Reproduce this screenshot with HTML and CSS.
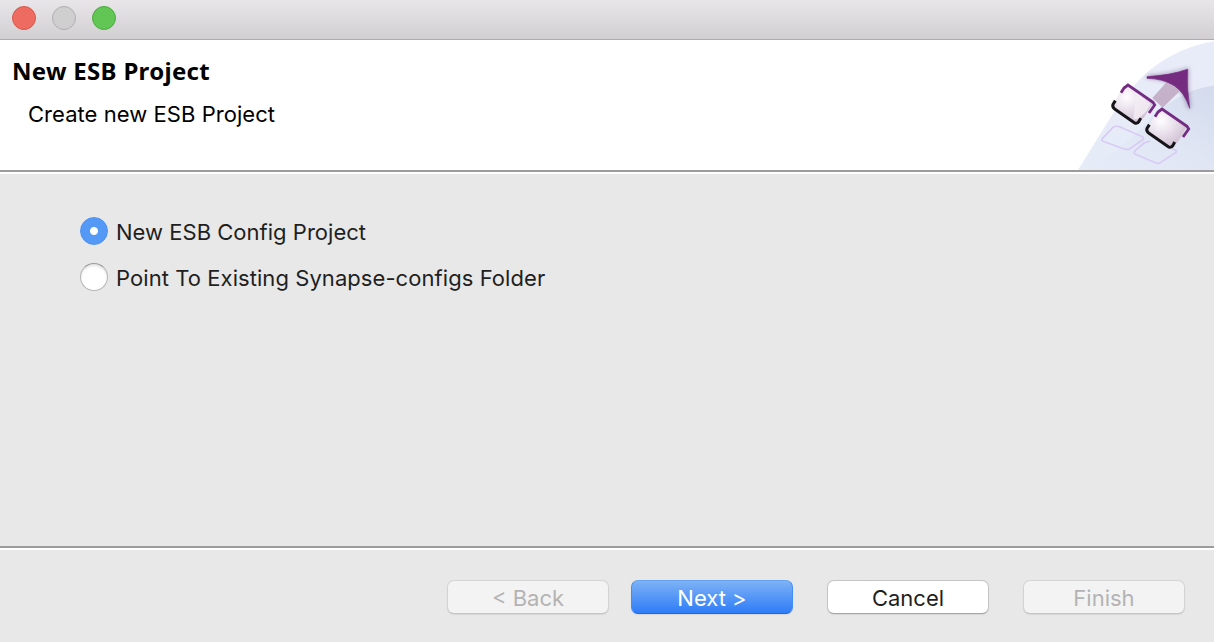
FILE: index.html
```html
<!DOCTYPE html>
<html lang="en">
<head>
<meta charset="utf-8">
<title>New ESB Project</title>
<link rel="stylesheet" href="styles.css">
</head>
<body>
<div class="dialog">
  <div class="titlebar">
    <span class="light close"></span>
    <span class="light minimize"></span>
    <span class="light maximize"></span>
  </div>
  <header class="banner">
    <div class="heading">
      <h1 class="title">New ESB Project</h1>
      <p class="subtitle">Create new ESB Project</p>
    </div>
    <svg class="art" viewBox="24 12 408 390" aria-hidden="true">
      <defs>
        <linearGradient id="sky" x1="0" y1="0" x2="0" y2="1">
          <stop offset="0" stop-color="#e9ecf8"/><stop offset="1" stop-color="#e6ebf8"/>
        </linearGradient>
        <linearGradient id="deep" x1="0" y1="1" x2="1" y2="0">
          <stop offset="0" stop-color="#e6ebf8"/><stop offset=".5" stop-color="#e0e6f4"/><stop offset="1" stop-color="#d2daec"/>
        </linearGradient>
        <radialGradient id="tile" cx=".35" cy=".3" r=".75">
          <stop offset="0" stop-color="#fffdff"/><stop offset=".35" stop-color="#eee8f1"/><stop offset="1" stop-color="#cdbbd0"/>
        </radialGradient>
        <filter id="soft" x="-20%" y="-20%" width="140%" height="140%"><feGaussianBlur stdDeviation="6"/></filter>
        <g id="card">
          <path d="M171 149 L248 202 L234 225 Q215 262 196 262 L130 216 Q126 207 136 194 L154 162 Q160 148 171 149Z" fill="url(#tile)"/>
          <path d="M153 170 L162 156 L174 147 L249 199 L254 207 L237 231" fill="none" stroke="#742c83" stroke-width="8.5"/>
          <path d="M136 194 L129 205 Q126 213 134 219 L193 260 Q201 265 207 256 L212 246" fill="none" stroke="#171419" stroke-width="9"/>
        </g>
      </defs>
      <path d="M24 402 L122 244 Q180 150 240 102 Q325 34 432 16 V402Z" fill="url(#sky)"/>
      <path d="M48 402 Q145 350 215 275 Q320 160 432 149 V402Z" fill="url(#deep)"/>
      <path d="M231 123 Q300 118 352 101 Q350 157 358 217 Q344 157 307 139 Q275 125 231 123Z" fill="none" stroke="#58346b" stroke-width="7" opacity=".55" filter="url(#soft)"/>
      <path d="M247 186 L292 136 Q317 142 333 162 L278 215Z" fill="#c5b1ca"/>
      <path d="M231 122 Q300 118 353 100 Q350 157 359 217 Q344 170 313 149 Q279 128 231 127Z" fill="#742b80" stroke="#742b80" stroke-width="2"/>
      <g fill="none" stroke="#d8caf4" stroke-width="5" stroke-linejoin="round">
        <path d="M97 308 L130 273 Q135 270 145 271 L214 301 Q225 306 217 312 L180 338 Q172 342 162 339 L99 316 Q94 312 97 308Z"/>
        <path d="M240 315 L222 321 L193 346 Q190 351 197 355 L256 380 Q264 384 271 380 L318 349 Q322 345 315 342 L307 338"/>
      </g>
      <use href="#card"/>
      <path d="M199 170 L243 203 L230 225 L205 248 L190 250Z" fill="#f4edf5" opacity=".8"/>
      <use href="#card" x="102" y="72"/>
    </svg>
  </header>
  <main class="options">
    <label class="option"><span class="radio selected"></span><span class="label first">New ESB Config Project</span></label>
    <label class="option"><span class="radio"></span><span class="label second">Point To Existing Synapse-configs Folder</span></label>
  </main>
  <footer class="actions">
    <button class="button back" disabled>&lt; Back</button>
    <button class="button next">Next &gt;</button>
    <button class="button cancel">Cancel</button>
    <button class="button finish" disabled>Finish</button>
  </footer>
</div>
</body>
</html>
```
FILE: styles.css
```css
* { box-sizing: border-box; }
body { margin: 0; }
.dialog {
  display: flex;
  flex-direction: column;
  width: 1214px;
  height: 642px;
  overflow: hidden;
  background: #e8e8e8;
  color: #1f1f1f;
  font: 22px/28px Inter, sans-serif;
}
.titlebar {
  display: flex;
  gap: 16px;
  height: 40px;
  padding: 6px 12px;
  border-bottom: 1px solid #adabad;
  background: linear-gradient(#e8e6e8, #d1cfd1);
}
.light { width: 24px; height: 24px; border: 1px solid; border-radius: 50%; }
.close { background: #ed6b60; border-color: #d9564c; }
.minimize { background: #d0cfd0; border-color: #b1b0b1; }
.maximize { background: #62c655; border-color: #50a943; }
.banner {
  display: flex;
  justify-content: space-between;
  height: 134px;
  border-bottom: 2px solid #fff;
  background: #fff;
  box-shadow: inset 0 -2px #9c9c9c;
}
.heading { padding: 14px 0 0 12px; color: #000; }
.title { margin: 0; font: bold 24px/34px "Noto Sans", sans-serif; letter-spacing: .3px; white-space: nowrap; }
.subtitle { margin: 12px 0 0 16px; letter-spacing: .05px; }
.art { display: block; width: 136px; height: 130px; }
.options {
  display: flex;
  flex-direction: column;
  gap: 18px;
  height: 372px;
  padding: 43px 80px 0;
}
.option { display: flex; gap: 8px; height: 28px; }
.radio {
  width: 28px;
  height: 28px;
  border: 1px solid #b5b5b5;
  border-top-color: #999;
  border-radius: 50%;
  background: #fff;
  box-shadow: inset 0 2px 2px #e5e5e5;
}
.selected {
  border-color: #4c91f3;
  background: radial-gradient(circle, #fff 0 3.5px, #5599f7 4.5px);
  box-shadow: none;
}
.label { padding-top: 1px; }
.first { letter-spacing: .02px; }
.second { letter-spacing: .065px; }
.actions {
  display: flex;
  height: 96px;
  padding-top: 30px;
  padding-left: 447px;
  border-top: 2px solid #9c9c9c;
  box-shadow: inset 0 2px #fff;
}
.button {
  width: 162px;
  height: 34px;
  margin: 2px 0 0;
  padding: 2px 0 0;
  border: 1px solid #c4c4c4;
  border-bottom-color: #a7a7a7;
  border-radius: 7px;
  background: #fff;
  color: #1f1f1f;
  font: 22px/30px Inter, sans-serif;
  box-shadow: 0 1px 1px #d5d5d5;
}
.button:disabled { background: #f3f3f3; color: #b3b3b3; border-color: #d3d3d3; border-bottom-color: #c5c5c5; }
.next {
  margin-left: 22px;
  border-color: #66a2ef #438cf1 #2164ee;
  background: linear-gradient(#7db2f5, #2e7cf8);
  color: #fff;
}
.cancel, .finish { margin-left: 34px; }
```
